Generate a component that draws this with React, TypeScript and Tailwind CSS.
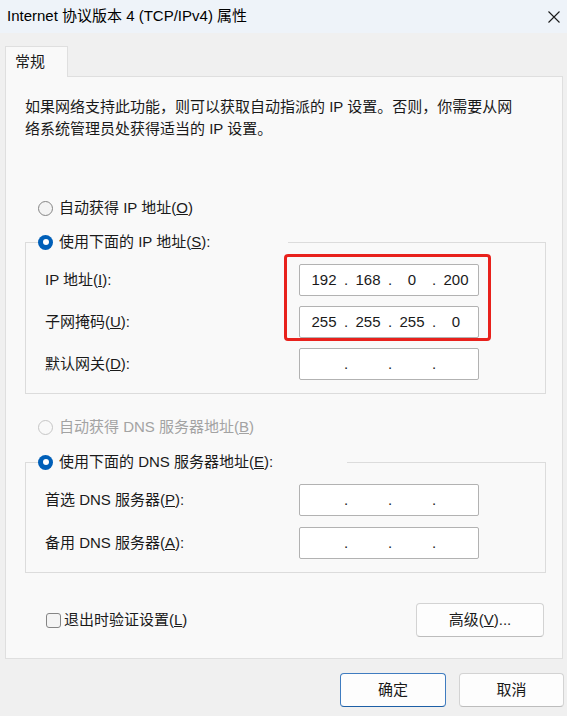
import type { ReactNode } from 'react'

const font = 'font-["Segoe_UI","Liberation_Sans","Noto_Sans_CJK_SC",sans-serif]'

function Radio({ checked, disabled }: { checked?: boolean; disabled?: boolean }) {
  if (checked) {
    return (
      <span className="flex h-[15px] w-[15px] shrink-0 items-center justify-center rounded-full bg-[#005fb8]">
        <span className="h-[6px] w-[6px] rounded-full bg-white" />
      </span>
    )
  }
  return (
    <span
      className={`h-[15px] w-[15px] shrink-0 rounded-full border ${
        disabled ? 'border-[#c6c6c6] bg-[#f9f9f9]' : 'border-[#858585] bg-[#f4f4f4]'
      }`}
    />
  )
}

function IpField({ parts = ['', '', '', ''] }: { parts?: string[] }) {
  return (
    <div className="flex h-[32px] w-[180px] items-center rounded-[2px] border border-[#b2b2b2] bg-white pl-[6px] text-[15px] text-[#1a1a1a]">
      {parts.map((p, i) => (
        <div key={i} className="flex items-center">
          <span className="w-[36px] text-center">{p}</span>
          {i < 3 && <span className="w-[8px] text-center">.</span>}
        </div>
      ))}
    </div>
  )
}

function Row({ label, parts }: { label: ReactNode; parts?: string[] }) {
  return (
    <div className="flex h-[32px] items-center justify-between">
      <span>{label}</span>
      <IpField parts={parts} />
    </div>
  )
}

function Btn({ children, primary, className = '' }: { children: ReactNode; primary?: boolean; className?: string }) {
  return (
    <button
      className={`flex items-center justify-center rounded-[4px] border bg-[#fdfdfd] text-[15px] text-[#1a1a1a] ${
        primary ? 'border-[#3f7cc0] border-b-[#1d5fa6]' : 'border-[#d3d3d3] border-b-[#bdbdbd]'
      } ${className}`}
    >
      {children}
    </button>
  )
}

export default function App() {
  return (
    <div className={`${font} flex h-[716px] w-[567px] flex-col bg-[#f0f0f0] text-[15px] text-[#1a1a1a]`}>
      {/* Title bar */}
      <div className="flex h-[33px] shrink-0 items-center justify-between bg-[#eef3f9] pl-[7px] pr-[7px]">
        <span className="text-[15px] text-black">Internet 协议版本 4 (TCP/IPv4) 属性</span>
        <svg width="12" height="12" viewBox="0 0 12 12">
          <path d="M0.5 0.5 L11.5 11.5 M11.5 0.5 L0.5 11.5" stroke="#1a1a1a" strokeWidth="1.1" />
        </svg>
      </div>

      <div className="px-[5px] pt-[13px]">
        {/* Tab */}
        <div className="relative z-10 -mb-px flex h-[31px] w-[63px] items-center border border-b-0 border-[#dfdfdf] bg-[#f9f9f9] pl-[9px]">
          常规
        </div>

        {/* Panel */}
        <div className="flex h-[583px] w-[558px] flex-col border border-[#dfdfdf] bg-[#f9f9f9] pl-[19px] pr-[17px] pt-[19px]">
          <p className="leading-[22px]">
            如果网络支持此功能，则可以获取自动指派的 IP 设置。否则，你需要从网
            <br />
            络系统管理员处获得适当的 IP 设置。
          </p>

          <div className="ml-[13px] mt-[57px] flex h-[22px] items-center gap-[6px]">
            <Radio />
            <span>
              自动获得 IP 地址(<u>O</u>)
            </span>
          </div>

          <fieldset className="mt-[12px] w-[521px] border border-[#dcdcdc] pb-[13px] pl-[19px] pr-[66px]">
            <legend className="ml-[-7px] flex h-[22px] w-[250px] items-center gap-[6px]">
              <Radio checked />
              <span>
                使用下面的 IP 地址(<u>S</u>):
              </span>
            </legend>
            <div className="relative mt-[11px] flex flex-col gap-[10px]">
              <Row label={<>IP 地址(<u>I</u>):</>} parts={['192', '168', '0', '200']} />
              <Row label={<>子网掩码(<u>U</u>):</>} parts={['255', '255', '255', '0']} />
              <div className="pointer-events-none absolute right-[-12px] top-[-10px] h-[87px] w-[207px] rounded-[4px] border-[3px] border-[#e8211c]" />
            </div>
            <div className="mt-[10px]">
              <Row label={<>默认网关(<u>D</u>):</>} />
            </div>
          </fieldset>

          <div className="ml-[13px] mt-[22px] flex h-[22px] items-center gap-[6px] text-[#a3a3a3]">
            <Radio disabled />
            <span>
              自动获得 DNS 服务器地址(<u>B</u>)
            </span>
          </div>

          <fieldset className="mt-[13px] w-[521px] border border-[#dcdcdc] pb-[13px] pl-[19px] pr-[66px]">
            <legend className="ml-[-7px] flex h-[22px] w-[309px] items-center gap-[6px]">
              <Radio checked />
              <span>
                使用下面的 DNS 服务器地址(<u>E</u>):
              </span>
            </legend>
            <div className="mt-[11px] flex flex-col gap-[11px]">
              <Row label={<>首选 DNS 服务器(<u>P</u>):</>} />
              <Row label={<>备用 DNS 服务器(<u>A</u>):</>} />
            </div>
          </fieldset>

          <div className="mt-[30px] flex items-center justify-between pr-[1px]">
            <div className="ml-[21px] flex items-center gap-[3px]">
              <span className="h-[15px] w-[15px] rounded-[3px] border border-[#858585] bg-[#f4f4f4]" />
              <span>
                退出时验证设置(<u>L</u>)
              </span>
            </div>
            <Btn className="h-[34px] w-[128px]">
              高级(<u>V</u>)...
            </Btn>
          </div>
        </div>
      </div>

      {/* Dialog buttons */}
      <div className="mt-[14px] flex justify-end gap-[13px] pr-[3px]">
        <Btn primary className="h-[34px] w-[106px]">
          确定
        </Btn>
        <Btn className="h-[34px] w-[105px]">取消</Btn>
      </div>
    </div>
  )
}
